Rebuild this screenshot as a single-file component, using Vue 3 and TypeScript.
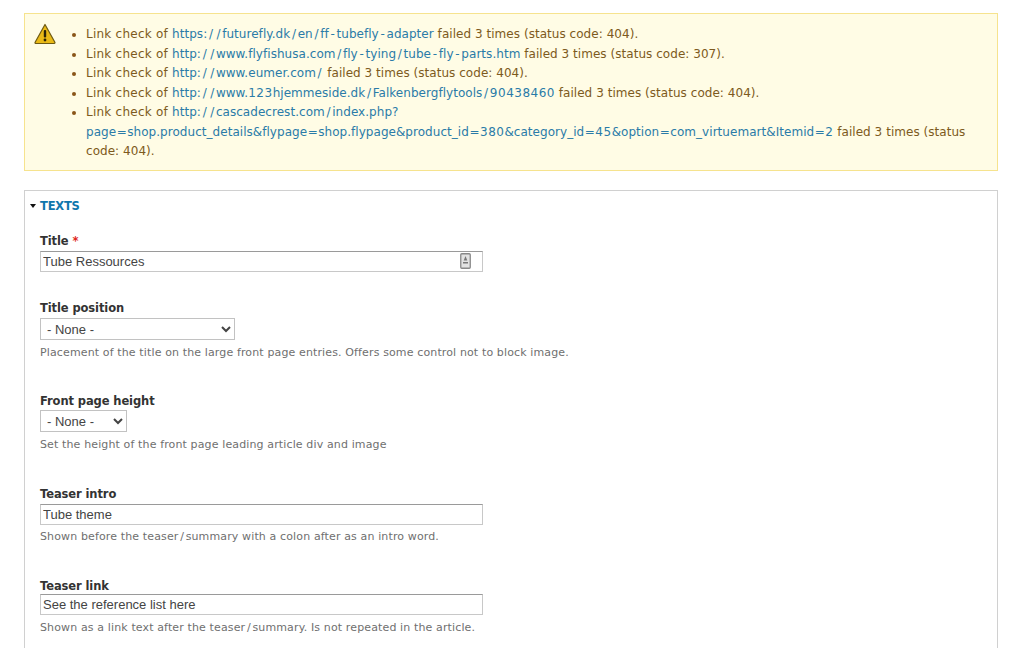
<script setup lang="ts">
interface Check { url: string; suffix: string }
interface Token { text: string; kind: string }
const checks: Check[] = [
  { url: 'https://futurefly.dk/en/ff-tubefly-adapter', suffix: ' failed 3 times (status code: 404).' },
  { url: 'http://www.flyfishusa.com/fly-tying/tube-fly-parts.htm', suffix: ' failed 3 times (status code: 307).' },
  { url: 'http://www.eumer.com/', suffix: ' failed 3 times (status code: 404).' },
  { url: 'http://www.123hjemmeside.dk/Falkenbergflytools/90438460', suffix: ' failed 3 times (status code: 404).' },
  { url: 'http://cascadecrest.com/index.php?page=shop.product_details&flypage=shop.flypage&product_id=380&category_id=45&option=com_virtuemart&Itemid=2', suffix: ' failed 3 times (status code: 404).' },
]
function tokens(url: string): Token[] {
  return url.split(/([\/\-=]|\d+)/).filter(Boolean).map((text) => ({
    text,
    kind: text === '/' || text === '-' ? 'sep' : text === '=' ? 'eq' : /^\d/.test(text) ? 'num' : 'txt',
  }))
}
</script>

<template>
  <div class="page">
    <div class="warning">
      <svg class="warn-icon" width="22" height="22" viewBox="0 0 22 22">
        <path d="M11 1.5 L21 19.5 Q21 20.5 20 20.5 L2 20.5 Q1 20.5 1 19.5 Z" fill="#e9b916" stroke="#6e5a12" stroke-width="1.2" stroke-linejoin="round" />
        <rect x="9.8" y="7" width="2.4" height="7.5" rx="1" fill="#2c2408" />
        <circle cx="11" cy="17" r="1.4" fill="#2c2408" />
      </svg>
      <ul class="messages">
        <li v-for="c in checks" :key="c.url">
          <span class="prefix">Link check of </span><a href="#" class="link"><span v-for="(t, i) in tokens(c.url)" :key="i" :class="t.kind">{{ t.text }}</span></a>{{ c.suffix }}
        </li>
      </ul>
    </div>

    <fieldset class="panel">
      <div class="legend"><span class="caret"></span><a href="#" class="legend-link">TEXTS</a></div>

      <div class="field f-title">
        <label>Title <span class="req">*</span></label>
        <div class="input-wrap">
          <input type="text" value="Tube Ressources" />
          <svg class="pw-icon" width="11" height="16" viewBox="0 0 11 16">
            <rect x="0.75" y="0.75" width="9.5" height="14.5" rx="1" fill="#e2e2e2" stroke="#888" stroke-width="1.3" />
            <rect x="3" y="9" width="5" height="1.5" fill="#777" />
            <path d="M5.5 3 L7.3 7.5 L3.7 7.5 Z" fill="#777" />
          </svg>
        </div>
      </div>

      <div class="field f-pos">
        <label>Title position</label>
        <select class="sel-wide"><option>- None -</option></select>
        <p class="desc">Placement of the title on the large front page entries. Offers some control not to block image.</p>
      </div>

      <div class="field f-height">
        <label>Front page height</label>
        <select class="sel-narrow"><option>- None -</option></select>
        <p class="desc">Set the height of the front page leading article div and image</p>
      </div>

      <div class="field f-intro">
        <label>Teaser intro</label>
        <input type="text" value="Tube theme" />
        <p class="desc tight">Shown before the teaser<span class="sep">/</span>summary with a colon after as an intro word.</p>
      </div>

      <div class="field f-link">
        <label>Teaser link</label>
        <input type="text" value="See the reference list here" />
        <p class="desc">Shown as a link text after the teaser<span class="sep">/</span>summary. Is not repeated in the article.</p>
      </div>
    </fieldset>
  </div>
</template>

<style>
html, body { margin: 0; padding: 0; background: #fff; overflow: hidden; }
</style>

<style scoped>
.page {
  height: 648px;
  overflow: hidden;
  box-sizing: border-box;
  padding: 13px 26px 0 24px;
  font-family: "DejaVu Sans", Verdana, sans-serif;
  font-size: 12px;
  color: #333;
}
.warning {
  display: flex;
  box-sizing: border-box;
  height: 158px;
  padding: 11px 30px 0 9px;
  background: #fffce5;
  border: 1px solid #f6e38e;
  color: #7d5a20;
}
.warn-icon { flex: none; margin-top: -2px; }
.messages {
  margin: 0;
  padding: 0 0 0 30px;
  line-height: 19.5px;
  letter-spacing: 0.04px;
}
.messages li::marker { color: #8a5518; }
.prefix { letter-spacing: 0.24px; }
.link { color: #2a7ba8; text-decoration: none; overflow-wrap: anywhere; }
.sep { padding: 0 1.7px; }
.eq { padding: 0 0.5px; }
.num { letter-spacing: 0.5px; }
.panel {
  margin: 19px 0 0;
  padding: 0 15px;
  min-width: 0;
  height: 500px;
  box-sizing: border-box;
  border: 1px solid #d0d0d0;
  border-bottom: 0;
}
.legend {
  display: flex;
  align-items: center;
  height: 29px;
  margin-left: -10px;
  font-size: 11.5px;
  font-weight: 700;
  letter-spacing: -0.2px;
}
.caret {
  width: 0;
  height: 0;
  margin-right: 4px;
  border-left: 3.5px solid transparent;
  border-right: 3.5px solid transparent;
  border-top: 4px solid #111;
}
.legend-link { color: #0f76ac; text-decoration: none; }
.field { display: flex; flex-direction: column; align-items: flex-start; }
.f-title { margin-top: 14px; }
.f-pos { margin-top: 29px; }
.f-height { margin-top: 34px; }
.f-intro { margin-top: 35px; }
.f-link { margin-top: 35px; }
label {
  display: block;
  height: 15px;
  line-height: 15px;
  margin-bottom: 2px;
  font-weight: 700;
  font-size: 11.5px;
  letter-spacing: -0.1px;
  color: #333;
}
.f-height label { margin-bottom: 1px; }
.f-link label { margin-bottom: 0; }
.req { color: #e0261c; }
.input-wrap { position: relative; }
input {
  display: block;
  box-sizing: border-box;
  width: 443px;
  height: 21px;
  padding: 0 2px;
  margin: 0;
  font-family: "Liberation Sans", Arial, sans-serif;
  font-size: 13px;
  color: #444;
  background: #fff;
  border: 1px solid #c8c8c8;
  border-top-color: #9a9a9a;
  border-radius: 0;
  outline: none;
}
.pw-icon { position: absolute; right: 12px; top: 2px; }
select {
  display: block;
  box-sizing: border-box;
  height: 22px;
  padding: 0 2px;
  margin: 0;
  font-family: "Liberation Sans", Arial, sans-serif;
  font-size: 13px;
  color: #444;
  background: #fff;
  border: 1px solid #c2c2c2;
  border-radius: 0;
}
.sel-wide { width: 195px; }
.sel-narrow { width: 87px; }
.desc {
  margin: 6px 0 0;
  font-size: 11px;
  line-height: 14px;
  color: #6f6f6f;
  letter-spacing: 0.13px;
}
.desc.tight { margin-top: 5px; }
</style>
